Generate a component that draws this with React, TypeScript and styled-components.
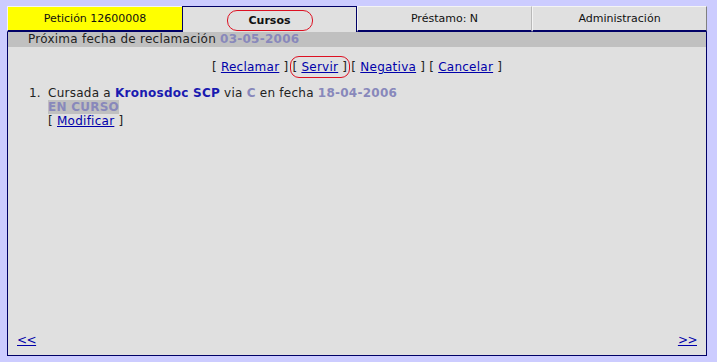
import React from "react";
import styled, { createGlobalStyle } from "styled-components";

const Global = createGlobalStyle`
  html, body {
    margin: 0;
    padding: 0;
    background: #ccccff;
  }
  body {
    font-family: "DejaVu Sans", Verdana, sans-serif;
    font-size: 12px;
    color: #222;
  }
`;

const Frame = styled.div`
  width: 700px;
  padding: 6px 10px 0 7px;
`;

const Tabs = styled.div`
  display: grid;
  grid-template-columns: repeat(4, 175px);
  height: 26px;
`;

const Tab = styled.div<{ $kind: "yellow" | "active" | "plain" }>`
  display: flex;
  align-items: center;
  justify-content: center;
  box-sizing: border-box;
  font-size: 11px;
  color: #111;
  background: ${(p) => (p.$kind === "yellow" ? "#ffff00" : "#e0e0e0")};
  border-left: 1px solid ${(p) => (p.$kind === "active" ? "#000066" : "#f4f4f4")};
  border-top: 1px solid ${(p) => (p.$kind === "active" ? "#000066" : "#f4f4f4")};
  border-right: 1px solid ${(p) => (p.$kind === "active" ? "#000066" : "#b8b8b8")};
  border-bottom: ${(p) => (p.$kind === "active" ? "none" : "2px solid #000066")};
  font-weight: ${(p) => (p.$kind === "active" ? "bold" : "normal")};
  &:first-child {
    border-right: none;
  }
  &:last-child {
    border-right-color: #808080;
  }
`;

const Circled = styled.span`
  display: inline-flex;
  align-items: center;
  justify-content: center;
  box-sizing: border-box;
  width: 86px;
  height: 21px;
  margin-top: 1px;
  border: 1px solid #dd1122;
  border-radius: 10px;
`;

const Panel = styled.div`
  box-sizing: border-box;
  height: 324px;
  background: #e0e0e0;
  border: 1px solid #000066;
  border-top: none;
  display: flex;
  flex-direction: column;
  letter-spacing: 0.25px;
`;

const InfoBar = styled.div`
  height: 15px;
  line-height: 15px;
  background: #c0c0c0;
  padding-left: 20px;
`;

const Faded = styled.span`
  color: #8888bb;
  font-weight: bold;
`;

const Strong = styled.span`
  color: #1a1ab0;
  font-weight: bold;
`;

const Actions = styled.div`
  margin-top: 13px;
  line-height: 14px;
  text-align: center;
`;

const Link = styled.a`
  color: #0000aa;
  text-decoration: underline;
  cursor: pointer;
`;

const Marked = styled.span`
  position: relative;
  &::after {
    content: "";
    position: absolute;
    left: -2px;
    right: -3px;
    top: -4px;
    bottom: -4px;
    border: 1px solid #dd1122;
    border-radius: 9px;
  }
`;

const List = styled.div`
  margin-top: 12px;
  padding-left: 21px;
  line-height: 14px;
`;

const Item = styled.div`
  display: grid;
  grid-template-columns: 19px auto;
`;

const Num = styled.span`
  letter-spacing: 0;
`;

const Status = styled.span`
  display: inline-block;
  background: #c0c0c0;
  color: #8888bb;
  font-weight: bold;
`;

const Footer = styled.div`
  margin-top: auto;
  display: flex;
  justify-content: space-between;
  padding: 0 9px 8px 9px;
  line-height: 14px;
  letter-spacing: -0.5px;
`;

export default function App() {
  return (
    <Frame>
      <Global />
      <Tabs>
        <Tab $kind="yellow">Petición 12600008</Tab>
        <Tab $kind="active">
          <Circled>Cursos</Circled>
        </Tab>
        <Tab $kind="plain">Préstamo: N</Tab>
        <Tab $kind="plain">Administración</Tab>
      </Tabs>
      <Panel>
        <InfoBar>
          Próxima fecha de reclamación <Faded>03-05-2006</Faded>
        </InfoBar>
        <Actions>
          [ <Link>Reclamar</Link> ] <Marked>[ <Link>Servir</Link> ]</Marked> [{" "}
          <Link>Negativa</Link> ] [ <Link>Cancelar</Link> ]
        </Actions>
        <List>
          <Item>
            <Num>1.</Num>
            <div>
              Cursada a <Strong>Kronosdoc SCP</Strong> via <Faded>C</Faded> en fecha{" "}
              <Faded>18-04-2006</Faded>
              <br />
              <Status>EN CURSO</Status>
              <br />[ <Link>Modificar</Link> ]
            </div>
          </Item>
        </List>
        <Footer>
          <Link>&lt;&lt;</Link>
          <Link>&gt;&gt;</Link>
        </Footer>
      </Panel>
    </Frame>
  );
}
